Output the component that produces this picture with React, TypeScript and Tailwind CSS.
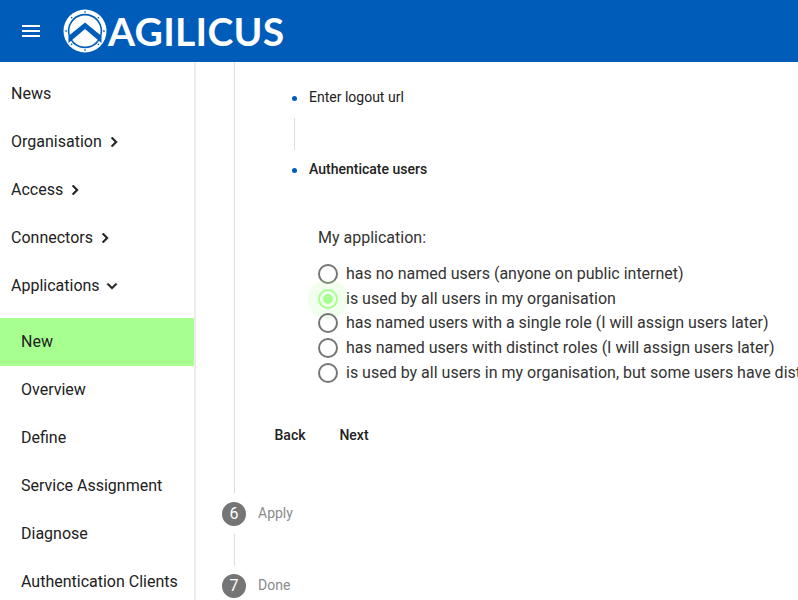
const topNav = [
  { title: "News" },
  { title: "Organisation", icon: "right" },
  { title: "Access", icon: "right" },
  { title: "Connectors", icon: "right" },
  { title: "Applications", icon: "down" },
];

const subNav = ["New", "Overview", "Define", "Service Assignment", "Diagnose", "Authentication Clients"];

const radios = [
  "has no named users (anyone on public internet)",
  "is used by all users in my organisation",
  "has named users with a single role (I will assign users later)",
  "has named users with distinct roles (I will assign users later)",
  "is used by all users in my organisation, but some users have distinct roles",
];

function MenuIcon() {
  return (
    <svg width="18" height="12" viewBox="0 0 18 12" fill="#fff" className="shrink-0">
      <rect y="0" width="18" height="2" />
      <rect y="5" width="18" height="2" />
      <rect y="10" width="18" height="2" />
    </svg>
  );
}

function Chevron({ down }: { down?: boolean }) {
  return (
    <svg width="20" height="20" viewBox="0 0 24 24" fill="#212121" stroke="#212121" strokeWidth="0.7" className="shrink-0 ml-0.5">
      <path d={down ? "M16.59 8.59L12 13.17 7.41 8.59 6 10l6 6 6-6z" : "M10 6L8.59 7.41 13.17 12l-4.58 4.59L10 18l6-6z"} />
    </svg>
  );
}

function Logo() {
  const marks = [0, 45, 90, 135, 180, 225, 270, 315];
  return (
    <svg width="44" height="44" viewBox="0 0 44 44" className="shrink-0">
      <circle cx="22" cy="22" r="21.5" fill="#fff" />
      <circle cx="22" cy="22" r="17.2" fill="#005cb9" />
      <circle cx="22" cy="22" r="15.6" fill="#fff" />
      <path d="M5.5 27 L22 13.5 L38.5 27 L38.5 34 L22 20 L5.5 34 Z" fill="#005cb9" />
      {marks.map((a) => (
        <path key={a} d="M20.8 3.6 L23.2 3.6 L22 1.8 Z" fill="#005cb9" transform={`rotate(${a} 22 22)`} />
      ))}
    </svg>
  );
}

function Sidebar() {
  return (
    <aside className="w-[196px] shrink-0 border-r-2 border-[#ececec] pt-[8px] text-[16px] text-[#212121]">
      {topNav.map((item) => (
        <div key={item.title} className="h-12 flex items-center pl-[11px]">
          <span>{item.title}</span>
          {item.icon === "right" && <Chevron />}
          {item.icon === "down" && <Chevron down />}
        </div>
      ))}
      <div className="mt-[8px]">
        {subNav.map((title, i) => (
          <div key={title} className={`h-12 flex items-center pl-[21px] ${i === 0 ? "bg-[#a6ff8f]" : ""}`}>
            {title}
          </div>
        ))}
      </div>
    </aside>
  );
}

function Radio({ label, checked }: { label: string; checked?: boolean }) {
  return (
    <div className="h-[24.6px] flex items-center gap-2 whitespace-nowrap">
      <span className="relative w-5 h-5 shrink-0">
        {checked && <span className="absolute -inset-2.5 rounded-full bg-[#a6ff8f]/15" />}
        <span
          className={`absolute inset-0 rounded-full border-2 ${checked ? "border-[#a6ff8f]" : "border-[#757575]"}`}
        />
        {checked && <span className="absolute inset-[5px] rounded-full bg-[#a6ff8f]" />}
      </span>
      <span>{label}</span>
    </div>
  );
}

function Step({ n, title }: { n: number; title: string }) {
  return (
    <div className="flex items-center gap-3 h-6">
      <div className="w-6 h-6 rounded-full bg-[#757575] text-white text-[16px] flex items-center justify-center">
        {n}
      </div>
      <span className="text-[14px] text-[#8a8a8a] -mt-0.5">{title}</span>
    </div>
  );
}

export default function App() {
  return (
    <div className="w-[798px] h-[600px] overflow-hidden flex flex-col bg-white font-['Roboto',sans-serif]">
      <header className="h-[62px] shrink-0 bg-[#005cb9] flex items-center pl-[22px] text-white">
        <MenuIcon />
        <div className="ml-[23px]">
          <Logo />
        </div>
        <span className="ml-px font-['Lato',sans-serif] text-[39px] leading-none tracking-[0.3px] font-bold">
          AGILICUS
        </span>
      </header>

      <div className="flex flex-1 min-h-0">
        <Sidebar />
        <main className="flex-1 min-w-0 overflow-hidden pl-[26px]">
          <div className="ml-3 border-l border-[#dcdcdc] h-[431px] relative">
            <div className="pl-[57px] pt-[27px] text-[14px] text-[#212121]">
              <div className="flex items-center gap-3 h-[17px]">
                <span className="w-[5px] h-[5px] mt-px rounded-full bg-[#005cb9]" />
                <span>Enter logout url</span>
              </div>
              <div className="ml-[2px] mt-[12px] mb-[11px] h-[32px] border-l border-[#dcdcdc]" />
              <div className="flex items-center gap-3 h-[17px] font-medium">
                <span className="w-[5px] h-[5px] mt-px rounded-full bg-[#005cb9]" />
                <span>Authenticate users</span>
              </div>
            </div>

            <div className="pl-[83px] pt-[50px] text-[16px] text-[#333333]">
              <div className="h-[20px] leading-[20px] mb-[14px]">My application:</div>
              {radios.map((label, i) => (
                <Radio key={label} label={label} checked={i === 1} />
              ))}
            </div>

            <div className="flex pl-[23px] mt-[33px] text-[14px] font-medium text-[#212121]">
              <button className="w-[64px] h-9 text-center">Back</button>
              <button className="w-[64px] h-9 text-center">Next</button>
            </div>
          </div>

          <div className="pt-[9px]">
            <Step n={6} title="Apply" />
            <div className="ml-3 mt-[8px] mb-[8px] h-[32px] border-l border-[#dcdcdc]" />
            <Step n={7} title="Done" />
          </div>
        </main>
      </div>
    </div>
  );
}
